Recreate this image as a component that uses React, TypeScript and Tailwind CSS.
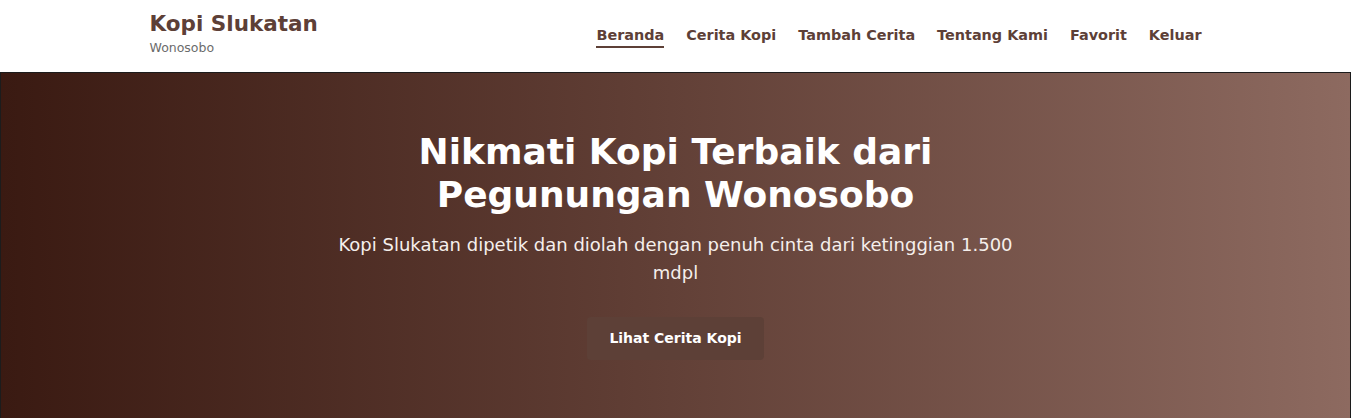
const navItems = ["Beranda", "Cerita Kopi", "Tambah Cerita", "Tentang Kami", "Favorit", "Keluar"];

const Header = () => {
  return (
    <header className="bg-white h-[72px]">
      <div className="max-w-[1100px] mx-auto px-6 flex justify-between items-start">
        <div className="pt-[12px]">
          <div className="text-[21.5px] leading-[1.1] font-bold text-[#5d4037]">Kopi Slukatan</div>
          <div className="mt-[3px] text-[12.5px] leading-[1.4] text-[#6b6b6b]">Wonosobo</div>
        </div>
        <nav className="pt-[25px] flex gap-[22px]">
          {navItems.map((item, i) => (
            <a
              key={item}
              href="#"
              className={
                i === 0
                  ? "text-[14.4px] leading-[21px] font-bold text-[#5d4037] border-b-2 border-[#5d4037]"
                  : "text-[14.4px] leading-[21px] font-bold text-[#5d4037] border-b-2 border-transparent"
              }
            >
              {item}
            </a>
          ))}
        </nav>
      </div>
    </header>
  );
};

const Hero = () => {
  return (
    <section className="border border-[#1c1c1c] bg-gradient-to-r from-[#3a1a12] to-[#8d6a60] pt-[57px] pb-[80px] text-center">
      <div className="max-w-[700px] mx-auto flex flex-col items-center">
        <h1 className="text-[36px] leading-[1.2] font-bold text-white">
          Nikmati Kopi Terbaik dari Pegunungan Wonosobo
        </h1>
        <p className="mt-[15px] text-[18px] leading-[28px] text-[#f5efec]">
          Kopi Slukatan dipetik dan diolah dengan penuh cinta dari ketinggian 1.500 mdpl
        </p>
        <button className="mt-[30px] bg-[#5d4037] text-white text-[14px] leading-[19px] font-bold px-[22px] py-3 rounded">
          Lihat Cerita Kopi
        </button>
      </div>
    </section>
  );
};

export default function App() {
  return (
    <div className="min-h-screen bg-white font-['DejaVu_Sans',sans-serif]">
      <Header />
      <Hero />
    </div>
  );
}
